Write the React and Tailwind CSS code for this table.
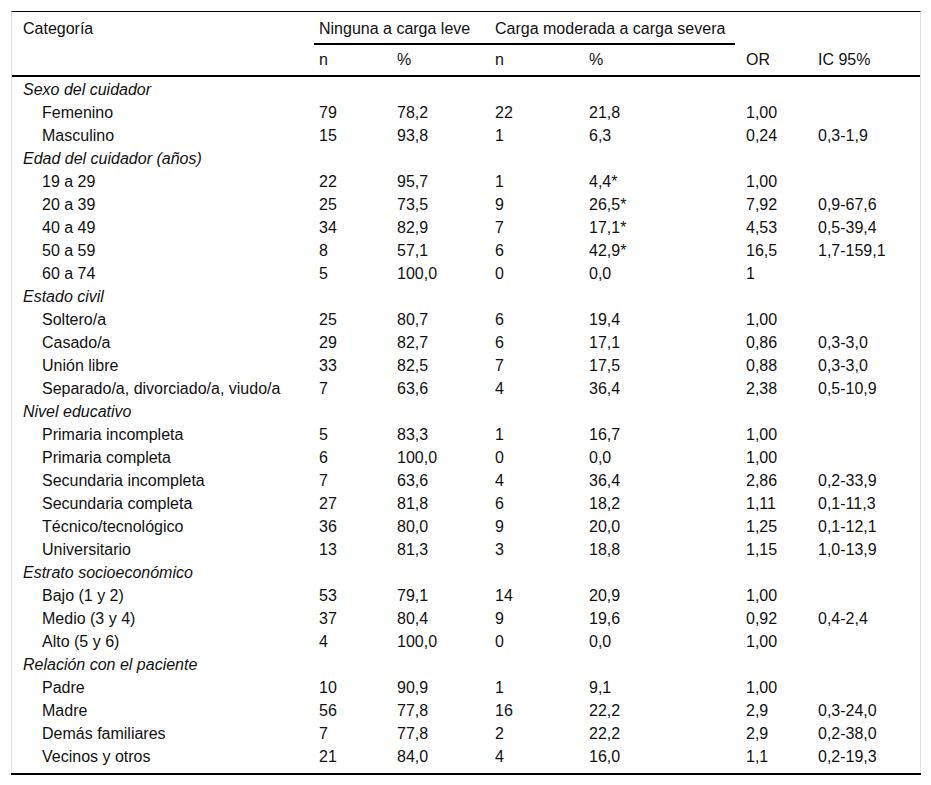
import React from "react";

const sections = [
  {
    title: "Sexo del cuidador",
    rows: [
      ["Femenino", "79", "78,2", "22", "21,8", "1,00", ""],
      ["Masculino", "15", "93,8", "1", "6,3", "0,24", "0,3-1,9"],
    ],
  },
  {
    title: "Edad del cuidador (años)",
    rows: [
      ["19 a 29", "22", "95,7", "1", "4,4*", "1,00", ""],
      ["20 a 39", "25", "73,5", "9", "26,5*", "7,92", "0,9-67,6"],
      ["40 a 49", "34", "82,9", "7", "17,1*", "4,53", "0,5-39,4"],
      ["50 a 59", "8", "57,1", "6", "42,9*", "16,5", "1,7-159,1"],
      ["60 a 74", "5", "100,0", "0", "0,0", "1", ""],
    ],
  },
  {
    title: "Estado civil",
    rows: [
      ["Soltero/a", "25", "80,7", "6", "19,4", "1,00", ""],
      ["Casado/a", "29", "82,7", "6", "17,1", "0,86", "0,3-3,0"],
      ["Unión libre", "33", "82,5", "7", "17,5", "0,88", "0,3-3,0"],
      ["Separado/a, divorciado/a, viudo/a", "7", "63,6", "4", "36,4", "2,38", "0,5-10,9"],
    ],
  },
  {
    title: "Nivel educativo",
    rows: [
      ["Primaria incompleta", "5", "83,3", "1", "16,7", "1,00", ""],
      ["Primaria completa", "6", "100,0", "0", "0,0", "1,00", ""],
      ["Secundaria incompleta", "7", "63,6", "4", "36,4", "2,86", "0,2-33,9"],
      ["Secundaria completa", "27", "81,8", "6", "18,2", "1,11", "0,1-11,3"],
      ["Técnico/tecnológico", "36", "80,0", "9", "20,0", "1,25", "0,1-12,1"],
      ["Universitario", "13", "81,3", "3", "18,8", "1,15", "1,0-13,9"],
    ],
  },
  {
    title: "Estrato socioeconómico",
    rows: [
      ["Bajo (1 y 2)", "53", "79,1", "14", "20,9", "1,00", ""],
      ["Medio (3 y 4)", "37", "80,4", "9", "19,6", "0,92", "0,4-2,4"],
      ["Alto (5 y 6)", "4", "100,0", "0", "0,0", "1,00", ""],
    ],
  },
  {
    title: "Relación con el paciente",
    rows: [
      ["Padre", "10", "90,9", "1", "9,1", "1,00", ""],
      ["Madre", "56", "77,8", "16", "22,2", "2,9", "0,3-24,0"],
      ["Demás familiares", "7", "77,8", "2", "22,2", "2,9", "0,2-38,0"],
      ["Vecinos y otros", "21", "84,0", "4", "16,0", "1,1", "0,2-19,3"],
    ],
  },
];

const grid = "grid grid-cols-[302px_78px_98px_94px_157px_72px_1fr]";

export default function App() {
  return (
    <div
      className="bg-white min-h-[785px] pt-[11px] text-[16px] text-[#111]"
      style={{ fontFamily: '"Liberation Sans", Arial, sans-serif' }}
    >
      <div className="ml-[11px] w-[910px] border-t border-t-black border-x border-x-[#e2e2e2]">
        {/* header row 1 */}
        <div className={grid}>
          <div className="pl-[11px] pt-[5px] h-[33px]">Categoría</div>
          <div className="col-span-4 mr-[6px] border-b-2 border-black flex h-[33px] pt-[5px]">
            <div className="w-[176px] pl-[5px]">Ninguna a carga leve</div>
            <div className="pl-[5px]">Carga moderada a carga severa</div>
          </div>
          <div className="col-span-2" />
        </div>
        {/* header row 2 */}
        <div className={grid + " border-b-2 border-black h-[32px] items-center"}>
          <div />
          <div className="pl-[5px]">n</div>
          <div className="pl-[5px]">%</div>
          <div className="pl-[5px]">n</div>
          <div className="pl-[5px]">%</div>
          <div className="pl-[5px]">OR</div>
          <div className="pl-[5px]">IC 95%</div>
        </div>
        {/* body */}
        <div className="pt-[1px] pb-[5px] border-b-2 border-black -mx-[1px]">
          <div className="mx-[1px]">
            {sections.map((s) => (
              <React.Fragment key={s.title}>
                <div className="h-[23px] leading-[23px] pl-[11px] italic">{s.title}</div>
                {s.rows.map((r) => (
                  <div key={r[0]} className={grid + " h-[23px] leading-[23px]"}>
                    <div className="pl-[30px] whitespace-nowrap">{r[0]}</div>
                    {r.slice(1).map((c, i) => (
                      <div key={i} className="pl-[5px] whitespace-nowrap">
                        {c}
                      </div>
                    ))}
                  </div>
                ))}
              </React.Fragment>
            ))}
          </div>
        </div>
      </div>
    </div>
  );
}
